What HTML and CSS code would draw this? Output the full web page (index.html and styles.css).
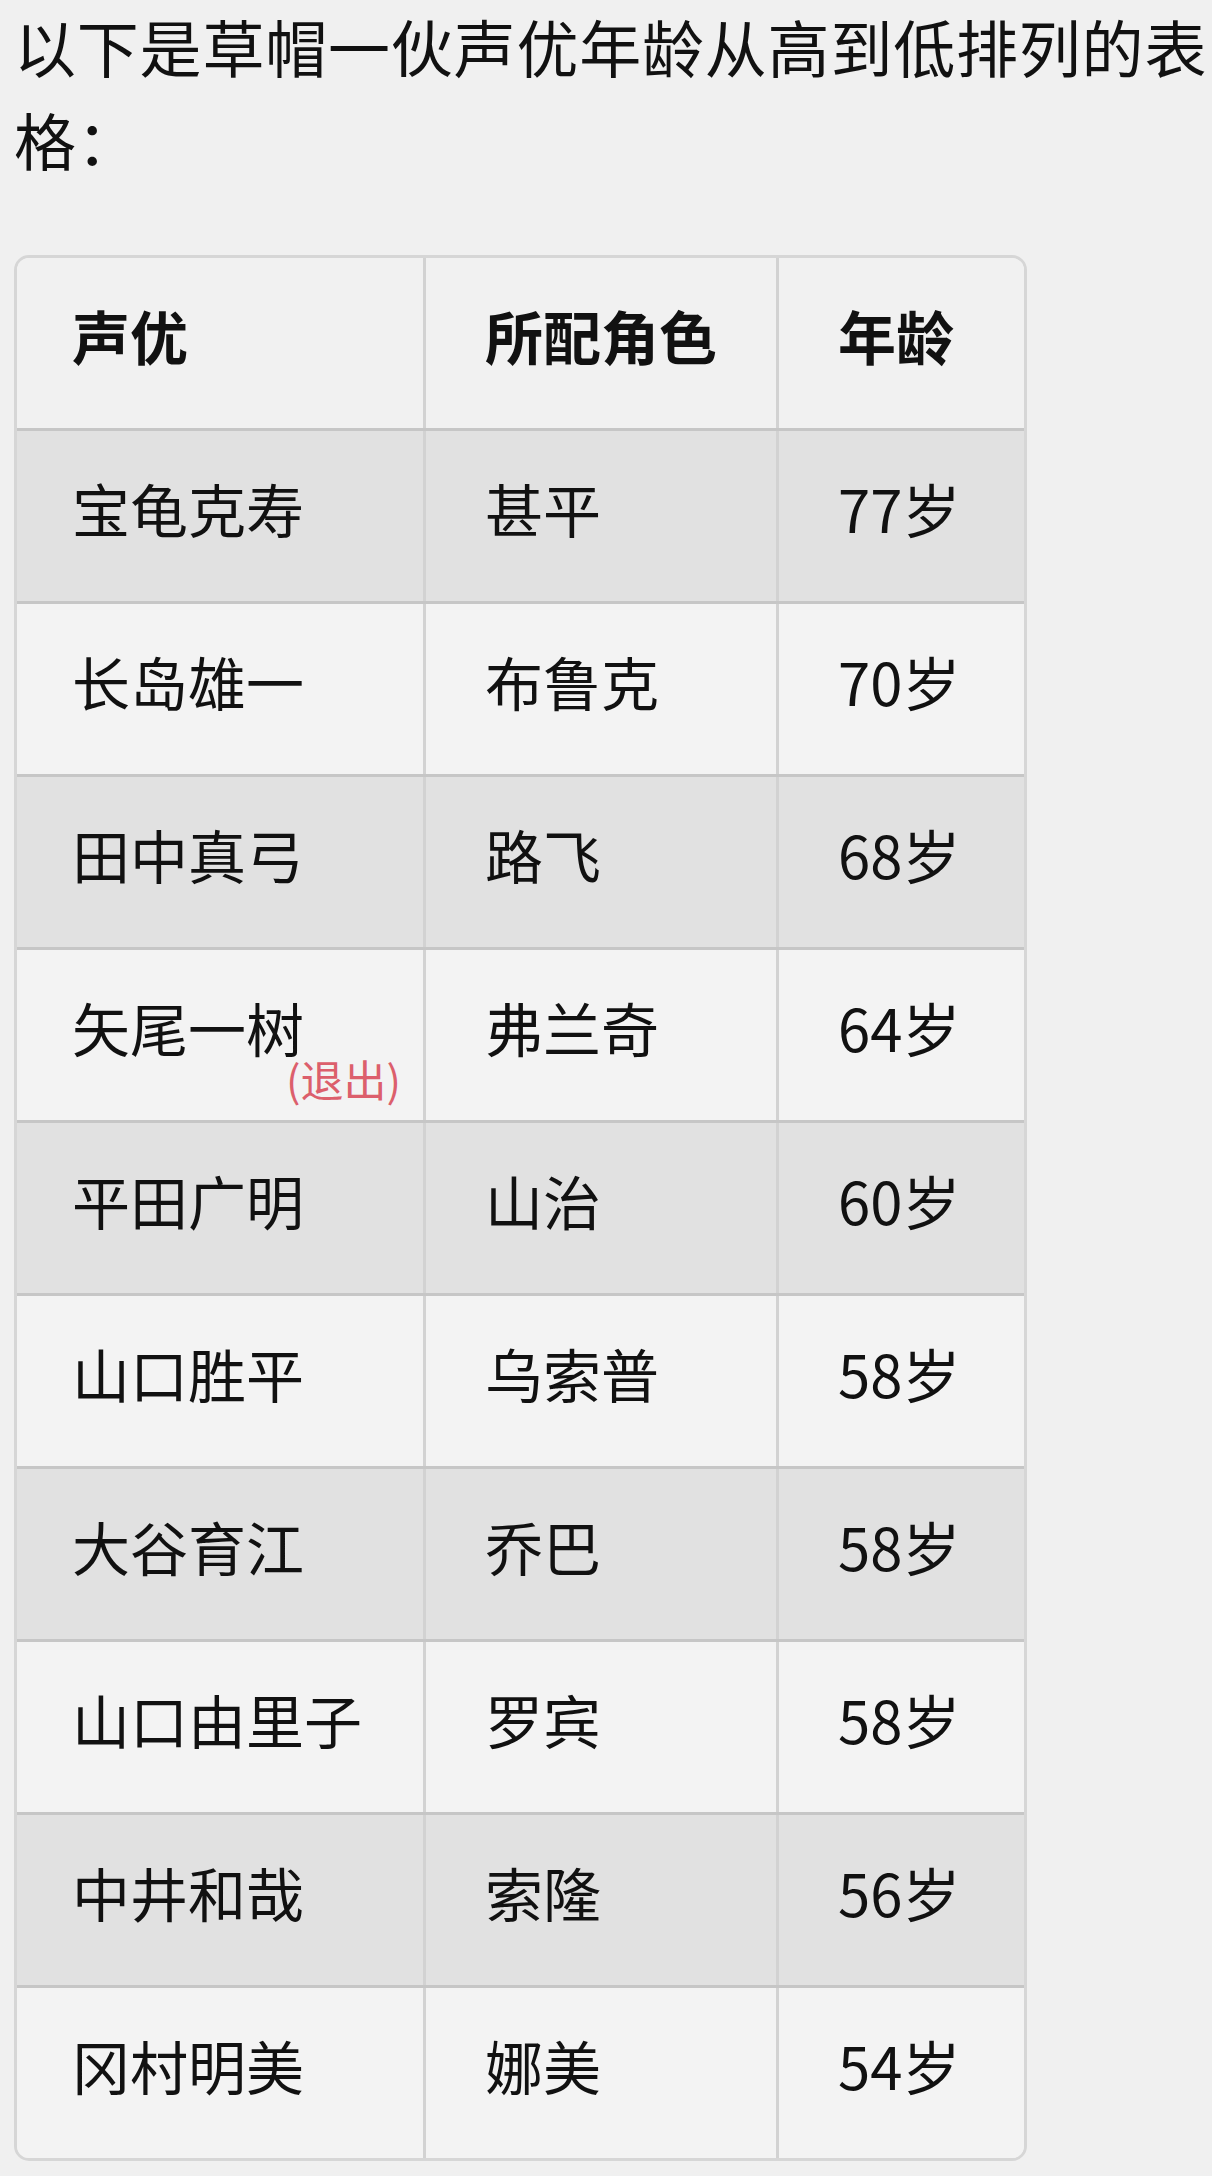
FILE: index.html
```html
<!DOCTYPE html>
<html lang="zh-CN">
<head>
<meta charset="utf-8">
<title>草帽一伙声优年龄</title>
<link rel="stylesheet" href="styles.css">
</head>
<body>
<p class="intro">以下是草帽一伙声优年龄从高到低排列的表格：</p>
<div class="table">
  <div class="row head">
    <div class="cell c1">声优</div>
    <div class="cell c2">所配角色</div>
    <div class="cell c3">年龄</div>
  </div>
  <div class="row dark">
    <div class="cell c1">宝龟克寿</div>
    <div class="cell c2">甚平</div>
    <div class="cell c3">77岁</div>
  </div>
  <div class="row">
    <div class="cell c1">长岛雄一</div>
    <div class="cell c2">布鲁克</div>
    <div class="cell c3">70岁</div>
  </div>
  <div class="row dark">
    <div class="cell c1">田中真弓</div>
    <div class="cell c2">路飞</div>
    <div class="cell c3">68岁</div>
  </div>
  <div class="row">
    <div class="cell c1"><span class="name">矢尾一树<span class="note">(退出)</span></span></div>
    <div class="cell c2">弗兰奇</div>
    <div class="cell c3">64岁</div>
  </div>
  <div class="row dark">
    <div class="cell c1">平田广明</div>
    <div class="cell c2">山治</div>
    <div class="cell c3">60岁</div>
  </div>
  <div class="row">
    <div class="cell c1">山口胜平</div>
    <div class="cell c2">乌索普</div>
    <div class="cell c3">58岁</div>
  </div>
  <div class="row dark">
    <div class="cell c1">大谷育江</div>
    <div class="cell c2">乔巴</div>
    <div class="cell c3">58岁</div>
  </div>
  <div class="row">
    <div class="cell c1">山口由里子</div>
    <div class="cell c2">罗宾</div>
    <div class="cell c3">58岁</div>
  </div>
  <div class="row dark">
    <div class="cell c1">中井和哉</div>
    <div class="cell c2">索隆</div>
    <div class="cell c3">56岁</div>
  </div>
  <div class="row last">
    <div class="cell c1">冈村明美</div>
    <div class="cell c2">娜美</div>
    <div class="cell c3">54岁</div>
  </div>
</div>
</body>
</html>
```

FILE: styles.css
```css
html, body {
  margin: 0;
  padding: 0;
  background: #f0f0f0;
}
body {
  font-family: "Noto Sans CJK SC", "Noto Sans", sans-serif;
  color: #111;
}
.intro {
  margin: 0;
  padding: 0 0 0 14px;
  font-size: 62px;
  line-height: 93px;
  letter-spacing: 0.8px;
}
.table {
  margin: 69px 0 16px 14px;
  width: 1013px;
  box-sizing: border-box;
  border: 3px solid #d6d6d6;
  border-radius: 15px;
  overflow: hidden;
  background: #f2f2f2;
}
.row {
  display: grid;
  grid-template-columns: 409px 353px 1fr;
  height: 173px;
  box-sizing: border-box;
  border-bottom: 3px solid #c6c6c6;
  background: #f3f3f3;
}
.row.head {
  background: #f1f1f1;
}
.row.dark {
  background: #e1e1e1;
}
.row.last {
  border-bottom: none;
  height: 170px;
}
.cell {
  display: flex;
  align-items: center;
  box-sizing: border-box;
  padding: 0 0 17px 59px;
  font-size: 58px;
  line-height: 1;
  border-right: 3px solid #d2d2d2;
}
.cell.c1 {
  padding-left: 55px;
}
.cell.c3 {
  border-right: none;
}
.head .cell {
  font-weight: 700;
}
.name {
  position: relative;
}
.note {
  position: absolute;
  left: 214px;
  top: calc(100% + 1px);
  font-size: 43px;
  line-height: 1;
  color: #dc5f6c;
  white-space: nowrap;
}
```
